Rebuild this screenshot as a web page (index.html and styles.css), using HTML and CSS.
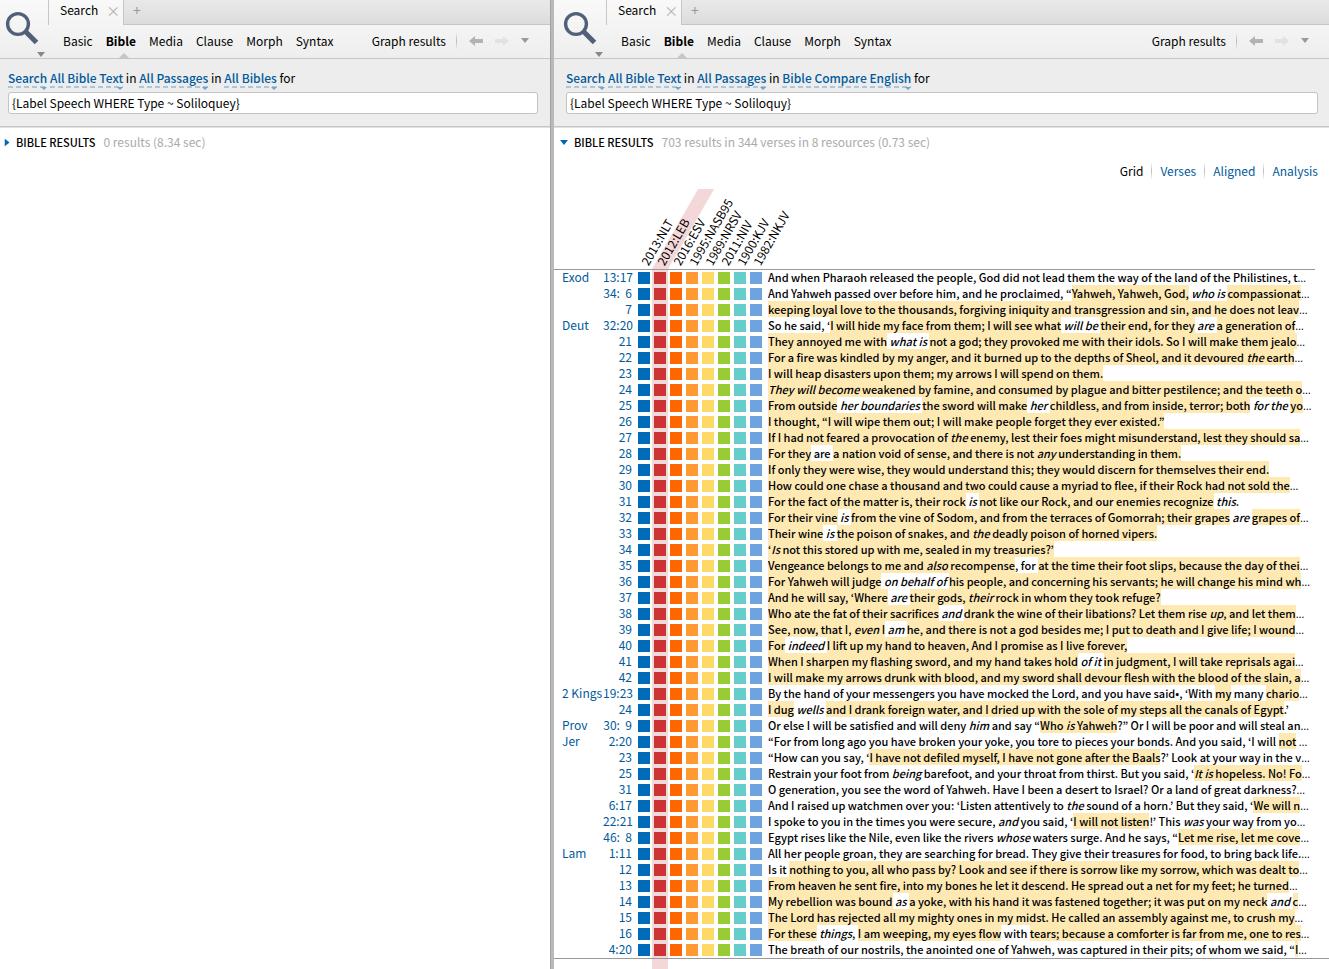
FILE: index.html
```html
<!DOCTYPE html>
<html lang="en">
<head>
<meta charset="utf-8">
<title>Search</title>
<link rel="stylesheet" href="styles.css">
</head>
<body>
<svg class="defs" aria-hidden="true">
  <symbol id="lens" viewBox="0 0 34 34"><circle cx="13" cy="13" r="10.4" fill="none" stroke="#525f78" stroke-width="3.4"/><path d="M20.5 20.5 31.5 31.5" stroke="#525f78" stroke-width="5"/></symbol>
  <symbol id="down" viewBox="0 0 8 5"><path d="M0 0H8L4 5Z" fill="currentColor"/></symbol>
  <symbol id="arrow" viewBox="0 0 14 10"><path d="M0 5 6 0V3H14V7H6V10Z" fill="currentColor"/></symbol>
</svg>
<div class="workspace">
  <section class="pane pane-left">
    <header class="top">
      <button class="panel-menu" aria-label="Panel menu"><svg class="lens"><use href="#lens"/></svg><svg class="caret"><use href="#down"/></svg></button>
      <div class="bars">
        <div class="tabs">
          <div class="tab"><span>Search</span><button class="close" aria-label="Close tab">×</button></div>
          <div class="strip"><button class="add" aria-label="New tab">+</button></div>
        </div>
        <nav class="nav">
          <a href="#">Basic</a><a href="#" class="current">Bible</a><a href="#">Media</a><a href="#">Clause</a><a href="#">Morph</a><a href="#">Syntax</a>
          <div class="tools">
            <a href="#">Graph results</a><i class="sep"></i>
            <button aria-label="Back"><svg class="arrow"><use href="#arrow"/></svg></button>
            <button aria-label="Forward" disabled><svg class="arrow forward"><use href="#arrow"/></svg></button>
            <button aria-label="History"><svg class="caret"><use href="#down"/></svg></button>
          </div>
        </nav>
      </div>
    </header>
    <form class="query">
      <p class="scope"><a href="#">Search</a> <a href="#">All Bible Text</a> in <a href="#">All Passages</a> in <a href="#">All Bibles</a> for</p>
      <input type="text" aria-label="Search query" value="{Label Speech WHERE Type ~ Soliloquey}">
    </form>
    <h2 class="results"><svg class="toggle closed"><use href="#down"/></svg><b>BIBLE RESULTS</b><span>0 results (8.34 sec)</span></h2>
  </section>
  <div class="splitter"></div>
  <section class="pane pane-right">
    <header class="top">
      <button class="panel-menu" aria-label="Panel menu"><svg class="lens"><use href="#lens"/></svg><svg class="caret"><use href="#down"/></svg></button>
      <div class="bars">
        <div class="tabs">
          <div class="tab"><span>Search</span><button class="close" aria-label="Close tab">×</button></div>
          <div class="strip"><button class="add" aria-label="New tab">+</button></div>
        </div>
        <nav class="nav">
          <a href="#">Basic</a><a href="#" class="current">Bible</a><a href="#">Media</a><a href="#">Clause</a><a href="#">Morph</a><a href="#">Syntax</a>
          <div class="tools">
            <a href="#">Graph results</a><i class="sep"></i>
            <button aria-label="Back"><svg class="arrow"><use href="#arrow"/></svg></button>
            <button aria-label="Forward" disabled><svg class="arrow forward"><use href="#arrow"/></svg></button>
            <button aria-label="History"><svg class="caret"><use href="#down"/></svg></button>
          </div>
        </nav>
      </div>
    </header>
    <form class="query">
      <p class="scope"><a href="#">Search</a> <a href="#">All Bible Text</a> in <a href="#">All Passages</a> in <a href="#">Bible Compare English</a> for</p>
      <input type="text" aria-label="Search query" value="{Label Speech WHERE Type ~ Soliloquy}">
    </form>
    <h2 class="results"><svg class="toggle"><use href="#down"/></svg><b>BIBLE RESULTS</b><span>703 results in 344 verses in 8 resources (0.73 sec)</span></h2>
    <nav class="views"><a href="#" class="current">Grid</a><i class="sep"></i><a href="#">Verses</a><i class="sep"></i><a href="#">Aligned</a><i class="sep"></i><a href="#">Analysis</a></nav>
    <table class="grid">
      <colgroup><col class="c-book"><col class="c-ref"><col class="c-v" span="8"><col></colgroup>
      <thead><tr><th></th><th></th></tr></thead>
      <tbody></tbody>
      <tfoot><tr><td colspan="3"></td><td class="band"></td><td colspan="7"></td></tr></tfoot>
    </table>
  </section>
</div>
<script src="app.js"></script>
</body>
</html>
```
FILE: styles.css
```css
* { box-sizing: border-box; }
body {
  margin: 0;
  color: #000;
  background: #fff;
  font: 12px/16px "Noto Sans CJK KR", "Noto Sans", sans-serif;
}
a { color: inherit; text-decoration: none; }
button { padding: 0; border: 0; background: none; font: inherit; color: inherit; }
svg { display: block; }
.defs { display: none; }

.workspace { display: flex; height: 100vh; overflow: hidden; }
.pane { min-width: 0; overflow: hidden; }
.pane-left { flex: 550 1 0; }
.pane-right { flex: 775 1 0; }
.splitter { flex: none; width: 4px; background: #b9b9b9; border-left: 1px solid #a3a3a3; }

.top { display: flex; height: 59px; border-bottom: 1px solid #c6c6c6; background: linear-gradient(#f9f9f9, #eee); }
.pane-right .top { padding-left: 4px; }
.panel-menu { position: relative; flex: none; width: 48px; }
.lens { position: absolute; left: 5px; top: 11px; width: 34px; height: 34px; }
.caret { width: 8px; height: 5px; color: #999; }
.panel-menu .caret { position: absolute; left: 37px; top: 52px; color: #888; }
.bars { flex: 1; min-width: 0; }
.tabs { display: flex; height: 25px; }
.tab { display: flex; align-items: center; gap: 8px; width: 75px; padding: 0 0 6px 11px; border-left: 1px solid #c6c6c6; white-space: nowrap; }
.close { color: #b5b5b5; font-size: 14px; }
.strip { flex: 1; padding: 2px 0 0 9px; border: solid #c6c6c6; border-width: 0 0 1px 1px; background: linear-gradient(#e9e9e9, #dcdcdc); }
.add { display: block; color: #999; font-size: 14px; }
.nav { display: flex; align-items: center; gap: 13px; height: 33px; padding: 0 0 2px 15px; white-space: nowrap; }
.nav .current { position: relative; font-weight: bold; }
.nav .current::after {
  content: "";
  position: absolute;
  left: 12px;
  top: 20px;
  border: solid transparent;
  border-width: 0 6px 6px;
  border-bottom-color: #c6c6c6;
}
.tools { display: flex; align-items: center; gap: 12px; margin-left: auto; padding-right: 21px; }
.pane-right .tools { padding-right: 20px; }
.tools .sep { margin-left: -2px; }
.sep { width: 1px; height: 18px; background: linear-gradient(transparent, #bbb, transparent); }
.arrow { width: 14px; height: 10px; color: #b3b3b3; }
.forward { transform: scaleX(-1); color: #e2e2e2; }

.query { height: 69px; padding: 11px 12px 0 8px; border-bottom: 1px solid #e0e0e0; background: #ededed; box-shadow: inset 0 -1px #c6c6c6; }
.pane-right .query { padding: 11px 11px 0 12px; }
.scope { margin: 0 0 6px; white-space: nowrap; }
.scope a { position: relative; color: #005a9c; font-weight: 500; }
.scope a::before {
  content: "";
  position: absolute;
  left: 0;
  right: 0;
  bottom: -2px;
  height: 2px;
  background: repeating-linear-gradient(90deg, #a9c8de 0 5px, transparent 5px 8px);
}
.scope a::after {
  content: "";
  position: absolute;
  right: 0;
  bottom: -4px;
  border: solid transparent;
  border-width: 3px 3px 0;
  border-top-color: #6fa3c9;
}
.query input { display: block; width: 100%; height: 22px; padding: 0 3px 2px; border: 1px solid #c3c3c3; border-radius: 3px; background: #fff; color: #000; font: inherit; }

.results { display: flex; align-items: center; height: 30px; margin: 0; padding: 0 0 2px 4px; font-size: 12px; font-weight: 400; white-space: nowrap; }
.results b { margin-right: 8px; font-size: 11px; font-weight: 500; }
.results span { color: #aaa; }
.toggle { width: 8px; height: 5px; margin: 0 6px 0 2px; color: #0069b4; }
.closed { margin: 0 5px 0 -1px; transform: rotate(-90deg); }
.views { display: flex; justify-content: flex-end; align-items: center; gap: 8px; height: 31px; padding: 0 11px 6px 0; color: #005a9c; }
.views .current { color: #000; }

.grid { width: 100%; table-layout: fixed; border-collapse: separate; border-spacing: 0; }
.c-book { width: 49px; }
.c-ref { width: 33px; }
.c-v { width: 16px; }
.grid th, .grid td { padding: 0; font-weight: normal; white-space: nowrap; vertical-align: top; }
.grid thead th { position: relative; height: 81px; border-bottom: 1px solid #999; }
.grid thead th:last-child { border: 0; background: linear-gradient(#999, #999) left bottom / calc(100% - 14px) 1px no-repeat; }
.grid thead .band { background: none; }
.grid thead .band::before { content: ""; position: absolute; inset: 0; background: #f4d8d9; transform: skewX(-30deg); transform-origin: 0 100%; }
.label { position: absolute; left: 15px; bottom: 1px; line-height: 16px; transform: rotate(-60deg); transform-origin: 0 100%; }
.grid tbody td, .grid tbody th { height: 16px; line-height: 14px; }
.grid tbody .book { padding-left: 8px; text-align: left; color: #005a9c; }
.grid tbody .ref { padding-right: 4px; text-align: right; color: #005a9c; white-space: pre; }
.band { background: #f4d8d9; }
.swatch { display: block; width: 12px; height: 12px; margin: 2px auto; }
.grid tbody .verse { padding-left: 4px; font-size: 11px; font-weight: 500; }
.verse mark { color: inherit; background: #ffe9b3; }
.more { font-family: "Open Sans", sans-serif; line-height: 1px; }
.grid tfoot td { height: 11px; border-top: 1px solid #999; }
```
FILE: app.js
```js
const versions = [
  ["2013:NLT", "#006bb8"], ["2012:LEB", "#cc3333"], ["2016:ESV", "#ff6600"], ["1995:NASB95", "#ff9933"],
  ["1989:NRSV", "#ffd966"], ["2011:NIV", "#99cc33"], ["1900:KJV", "#66cccc"], ["1982:NKJV", "#6fa3e0"]
];

// Square brackets mark a highlighted run, asterisks an italic one.
const verses = `Exod|13:17|And when Pharaoh released the people, God did not lead them the way of the land of the Philistines, t…
|34:  6|And Yahweh passed over before him, and he proclaimed, “[Yahweh, Yahweh, God,] *who is* [compassionat]…
|7|[keeping loyal love to the thousands, forgiving iniquity and transgression and sin, and he does not leav]…
Deut|32:20|So he said, ‘[I will hide my face from them; I will see what] *will be* [their end, for they] *are* [a generation of]…
|21|[They annoyed me with] *what is* [not a god; they provoked me with their idols. So I will make them jealo]…
|22|[For a fire was kindled by my anger, and it burned up to the depths of Sheol, and it devoured *the* earth]…
|23|[I will heap disasters upon them; my arrows I will spend on them.]
|24|[*They will become* weakened by famine, and consumed by plague and bitter pestilence; and the teeth o]…
|25|[From outside] *her boundaries* [the sword will make] *her* [childless, and from inside, terror; both] *for the* [yo]…
|26|[I thought, “I will wipe them out; I will make people forget they ever existed.”]
|27|[If I had not feared a provocation of *the* enemy, lest their foes might misunderstand, lest they should sa]…
|28|[For they] are [a nation void of sense, and there is not *any* understanding in them.]
|29|[If only they were wise, they would understand this; they would discern for themselves their end.]
|30|[How could one chase a thousand and two could cause a myriad to flee, if their Rock had not sold the]…
|31|[For the fact of the matter is, their rock] *is* [not like our Rock, and our enemies recognize] *this*.
|32|[For their vine] *is* [from the vine of Sodom, and from the terraces of Gomorrah; their grapes] *are* [grapes of]…
|33|[Their wine] *is* [the poison of snakes, and *the* deadly poison of horned vipers.]
|34|[‘*Is* not this stored up with me, sealed in my treasuries?’]
|35|[Vengeance belongs to me and *also* recompense], for [at the time their foot slips, because the day of thei]…
|36|[For Yahweh will judge] *on behalf of* [his people, and concerning his servants; he will change his mind wh]…
|37|[And he will say, ‘Where] *are* [their gods, *their* rock in whom they took refuge?]
|38|[Who ate the fat of their sacrifices] *and* [drank the wine of their libations? Let them rise *up*, and let them]…
|39|[See, now, that I, *even* I] *am* [he, and there is not a god besides me; I put to death and I give life; I wound]…
|40|[For] *indeed* [I lift up my hand to heaven, And I promise as I live forever,]
|41|[When I sharpen my flashing sword, and my hand takes hold] *of it* [in judgment, I will take reprisals agai]…
|42|[I will make my arrows drunk with blood, and my sword shall devour flesh with the blood of the slain, a]…
2 Kings|19:23|By the hand of your messengers you have mocked the Lord, and you have said•, ‘With [my] many [chario]…
|24|[I dug] *wells* [and I drank foreign water, and I dried up with the sole of my steps all the canals of Egypt].’
Prov|30:  9|Or else I will be satisfied and will deny *him* and say “[Who *is* Yahweh]?” Or I will be poor and will steal an…
Jer|2:20|“For from long ago you have broken your yoke, you tore to pieces your bonds. And you said, ‘I will [not] …
|23|“How can you say, ‘[I have not defiled myself, I have not gone after the Baals]?’ Look at your way in the v…
|25|Restrain your foot from *being* barefoot, and your throat from thirst. But you said, ‘[*It is* hopeless. No! Fo]…
|31|O generation, you see the word of Yahweh. Have I been a desert to Israel? Or a land of great darkness?…
|6:17|And I raised up watchmen over you: ‘Listen attentively to *the* sound of a horn.’ But they said, ‘[We will n]…
|22:21|I spoke to you in the times you were secure, *and* you said, ‘[I will not listen]!’ This *was* your way from yo…
|46:  8|Egypt rises like the Nile, even like the rivers *whose* waters surge. And he says, “[Let me rise, let me cove]…
Lam|1:11|All her people groan, they are searching for bread. They give their treasures for food, to bring back life.…
|12|Is it [nothing to you, all who pass by? Look and see if there is sorrow like my sorrow, which was dealt to]…
|13|[From heaven he sent fire, into my bones he let it descend. He spread out a net for my feet; he turned]…
|14|[My rebellion was bound] *as* [a yoke, with his hand it was fastened together; it was put on my neck] *and* [c]…
|15|[The Lord has rejected all my mighty ones in my midst. He called an assembly against me, to crush my]…
|16|[For these] *things*, [I am weeping, my eyes flow] with [tears; because a comforter is far from me, one to res]…
|4:20|The breath of our nostrils, the anointed one of Yahweh, was captured in their pits; of whom we said, “[I]…`;

const format = text => text
  .replace(/\*(.+?)\*/g, "<em>$1</em>")
  .replace(/\[/g, "<mark>")
  .replace(/\]/g, "</mark>")
  .replace(/…$/, '<span class="more">…</span>');

const band = i => (i === 1 ? ' class="band"' : "");

document.querySelector(".grid thead tr").insertAdjacentHTML("beforeend",
  versions.map(([name], i) => `<th scope="col"${band(i)}><span class="label">${name}</span></th>`).join("") + "<th></th>");

const swatches = versions
  .map(([, color], i) => `<td${band(i)}><span class="swatch" style="background:${color}"></span></td>`).join("");

document.querySelector(".grid tbody").innerHTML = verses.split("\n").map(line => {
  const [book, ref, text] = line.split("|");
  return `<tr><th scope="row" class="book">${book}</th><td class="ref">${ref}</td>${swatches}<td class="verse">${format(text)}</td></tr>`;
}).join("");
```
